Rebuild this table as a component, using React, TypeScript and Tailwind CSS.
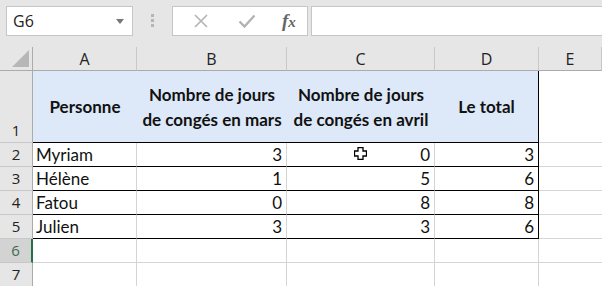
import React from "react";

const cols = ["A", "B", "C", "D", "E"];
const colW = "grid-cols-[33px_104px_150px_148px_104px_1fr]";

type Row = { name: string; b: number; c: number; d: number };
const rows: Row[] = [
  { name: "Myriam", b: 3, c: 0, d: 3 },
  { name: "Hélène", b: 1, c: 5, d: 6 },
  { name: "Fatou", b: 0, c: 8, d: 8 },
  { name: "Julien", b: 3, c: 3, d: 6 },
];

const cellFont = { fontFamily: "Lato, 'Open Sans', sans-serif" };

function RowHead({ n, active }: { n: number; active?: boolean }) {
  return (
    <div
      className={`flex items-end justify-center border-b border-[#c8c8c8] pb-[1px] text-[15px] leading-[22px] ${
        active ? "bg-[#d3d3d3] text-[#3b6e51] border-r-2 border-r-[#217346]" : "bg-[#e6e6e6] text-[#222] border-r border-r-[#ababab]"
      }`}
      style={{ fontFamily: "'Open Sans', sans-serif" }}
    >
      {n}
    </div>
  );
}

function Cursor() {
  return (
    <svg width="13" height="13" viewBox="0 0 13 13" className="absolute left-[354px] top-[147px]">
      <path
        d="M4 0.5h5v3.5h3.5v5H9v3.5H4V9H0.5V4H4z"
        fill="#fff"
        stroke="#000"
        strokeWidth="1.3"
      />
    </svg>
  );
}

export default function App() {
  return (
    <div className="relative w-[602px] h-[286px] overflow-hidden bg-[#e6e6e6] select-none">
      {/* formula toolbar */}
      <div className="flex h-[47px] items-start pt-[6px] pl-[6px]">
        <div
          className="flex h-[30px] w-[127px] items-center justify-between border border-[#c6c6c6] bg-white pl-[6px] pr-[8px] text-[16px] text-[#222]"
          style={{ fontFamily: "'Open Sans', sans-serif" }}
        >
          <span>G6</span>
          <svg width="8" height="5" viewBox="0 0 8 5">
            <path d="M0 0h8L4 5z" fill="#777" />
          </svg>
        </div>
        <div className="flex w-[39px] flex-col items-center gap-[2px] pt-[8px]">
          <div className="h-[3px] w-[3px] bg-[#b5b5b5]" />
          <div className="h-[3px] w-[3px] bg-[#b5b5b5]" />
          <div className="h-[3px] w-[3px] bg-[#b5b5b5]" />
        </div>
        <div className="flex h-[30px] w-[136px] items-center border border-[#c6c6c6] bg-white">
          <svg width="16" height="16" viewBox="0 0 16 16" className="ml-[20px]">
            <path d="M2 2L14 14M14 2L2 14" stroke="#b3b3b3" strokeWidth="1.6" />
          </svg>
          <svg width="18" height="16" viewBox="0 0 18 16" className="ml-[29px]">
            <path d="M1.5 8.5L6.5 13.5L16.5 2.5" stroke="#b3b3b3" strokeWidth="2.4" fill="none" />
          </svg>
          <span
            className="ml-[26px] text-[19px] italic font-bold text-[#666]"
            style={{ fontFamily: "'Liberation Serif', serif" }}
          >
            <span>f</span>
            <span className="text-[15px]">x</span>
          </span>
        </div>
        <div className="ml-[3px] h-[30px] flex-1 border border-[#c6c6c6] border-r-0 bg-white" />
      </div>

      {/* sheet grid */}
      <div className={`grid ${colW} grid-rows-[24px_72px_24px_24px_24px_24px_24px_24px] bg-white`}>
        {/* corner */}
        <div className="relative border-r border-b border-[#ababab] bg-[#e6e6e6]">
          <svg width="17" height="17" viewBox="0 0 17 17" className="absolute right-[3px] bottom-[3px]">
            <path d="M17 0V17H0z" fill="#b7b7b7" />
          </svg>
        </div>
        {cols.map((c) => (
          <div
            key={c}
            className="flex items-center justify-center border-r border-b border-r-[#c8c8c8] border-b-[#ababab] bg-[#e6e6e6] text-[16px] text-[#222]"
            style={{ fontFamily: "'Open Sans', sans-serif" }}
          >
            {c}
          </div>
        ))}

        {/* row 1: headings */}
        <RowHead n={1} />
        <div
          className="flex items-center justify-center border-b border-black bg-[#dde8f8] text-[17px] font-bold text-[#111]"
          style={cellFont}
        >
          Personne
        </div>
        <div
          className="flex items-center justify-center border-b border-black bg-[#dde8f8] text-center text-[17px] leading-[25px] font-bold text-[#111] whitespace-nowrap"
          style={cellFont}
        >
          Nombre de jours
          <br />
          de congés en mars
        </div>
        <div
          className="flex items-center justify-center border-b border-black bg-[#dde8f8] text-center text-[17px] leading-[25px] font-bold text-[#111] whitespace-nowrap"
          style={cellFont}
        >
          Nombre de jours
          <br />
          de congés en avril
        </div>
        <div
          className="flex items-center justify-center border-r border-b border-black bg-[#dde8f8] text-[17px] font-bold text-[#111]"
          style={cellFont}
        >
          Le total
        </div>
        <div className="border-b border-[#d4d4d4]" />

        {rows.map((r, i) => (
          <React.Fragment key={r.name}>
            <RowHead n={i + 2} />
            <div className="flex items-center border-r border-b border-r-[#d4d4d4] border-b-black pl-[3px] text-[17px] text-[#111]" style={cellFont}>
              {r.name}
            </div>
            <div className="flex items-center justify-end border-r border-b border-r-[#d4d4d4] border-b-black pr-[4px] text-[17px] text-[#111]" style={cellFont}>
              {r.b}
            </div>
            <div className="flex items-center justify-end border-r border-b border-r-[#d4d4d4] border-b-black pr-[4px] text-[17px] text-[#111]" style={cellFont}>
              {r.c}
            </div>
            <div className="flex items-center justify-end border-r border-b border-black pr-[4px] text-[17px] text-[#111]" style={cellFont}>
              {r.d}
            </div>
            <div className="border-b border-[#d4d4d4]" />
          </React.Fragment>
        ))}

        {[6, 7].map((n) => (
          <React.Fragment key={n}>
            <RowHead n={n} active={n === 6} />
            {[0, 1, 2, 3].map((k) => (
              <div key={k} className="border-r border-b border-[#d4d4d4]" />
            ))}
            <div className="border-b border-[#d4d4d4]" />
          </React.Fragment>
        ))}
      </div>
      <Cursor />
    </div>
  );
}
